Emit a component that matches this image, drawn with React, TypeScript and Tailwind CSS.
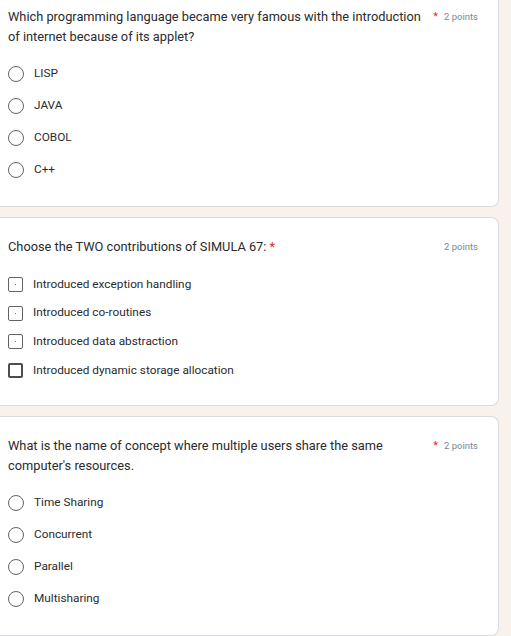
import React from "react";

type Question = {
  title: string;
  required: boolean;
  inlineStar?: boolean;
  kind: "radio" | "checkbox";
  options: string[];
};

const questions: Question[] = [
  {
    title:
      "Which programming language became very famous with the introduction of internet because of its applet?",
    required: true,
    kind: "radio",
    options: ["LISP", "JAVA", "COBOL", "C++"],
  },
  {
    title: "Choose the TWO contributions of SIMULA 67:",
    required: true,
    inlineStar: true,
    kind: "checkbox",
    options: [
      "Introduced exception handling",
      "Introduced co-routines",
      "Introduced data abstraction",
      "Introduced dynamic storage allocation",
    ],
  },
  {
    title:
      "What is the name of concept where multiple users share the same computer's resources.",
    required: true,
    kind: "radio",
    options: ["Time Sharing", "Concurrent", "Parallel", "Multisharing"],
  },
];

const Radio: React.FC = () => (
  <span className="w-4 h-4 rounded-full border-[1.5px] border-[#5f6368] shrink-0" />
);

const Checkbox: React.FC<{ dotted: boolean }> = ({ dotted }) => (
  <span
    className={`w-[15px] h-[15px] rounded-[2px] shrink-0 flex items-center justify-center ${
      dotted ? "border-[1.5px] border-[#5f6368]" : "border-2 border-[#4a4d51]"
    }`}
  >
    {dotted && <span className="w-px h-px bg-[#777]" />}
  </span>
);

const QuestionCard: React.FC<{ q: Question; first?: boolean }> = ({ q, first }) => {
  const isCheck = q.kind === "checkbox";
  return (
    <div
      className={`bg-white border border-[#dadce0] border-l-0 rounded-r-lg pl-2 pr-5 pb-5 ${
        first ? "-mt-[3px] pt-[10px] rounded-tr-none border-t-0" : "pt-[19px]"
      }`}
    >
      {/* Title row */}
      <div className="flex items-start">
        <p className="w-[418px] text-[12.8px] leading-5 text-[#2a2b2e]">
          {q.title}
          {q.inlineStar && <span className="text-[#d93025]"> *</span>}
        </p>
        <div className="flex-1 flex justify-end items-center gap-[6px] h-5 whitespace-nowrap">
          {q.required && !q.inlineStar && (
            <span className="text-[11px] text-[#d93025]">*</span>
          )}
          <span className="text-[9.5px] text-[#80868b]">2 points</span>
        </div>
      </div>

      {/* Options */}
      <div className={isCheck ? "mt-[13px]" : "mt-[11px]"}>
        {q.options.map((opt, i) => (
          <div
            key={opt}
            className={`flex items-center gap-[10px] ${isCheck ? "h-[28.7px]" : "h-8"}`}
          >
            {isCheck ? <Checkbox dotted={i < 3} /> : <Radio />}
            <span className="text-[11.8px] text-[#2a2b2e]">{opt}</span>
          </div>
        ))}
      </div>
    </div>
  );
};

const App: React.FC = () => {
  return (
    <div
      className="w-[511px] h-[636px] overflow-hidden bg-[#f8f1ec] pr-3 flex flex-col gap-[10px]"
      style={{ fontFamily: "Roboto, 'Liberation Sans', sans-serif" }}
    >
      {questions.map((q, i) => (
        <QuestionCard key={i} q={q} first={i === 0} />
      ))}
    </div>
  );
};

export default App;
